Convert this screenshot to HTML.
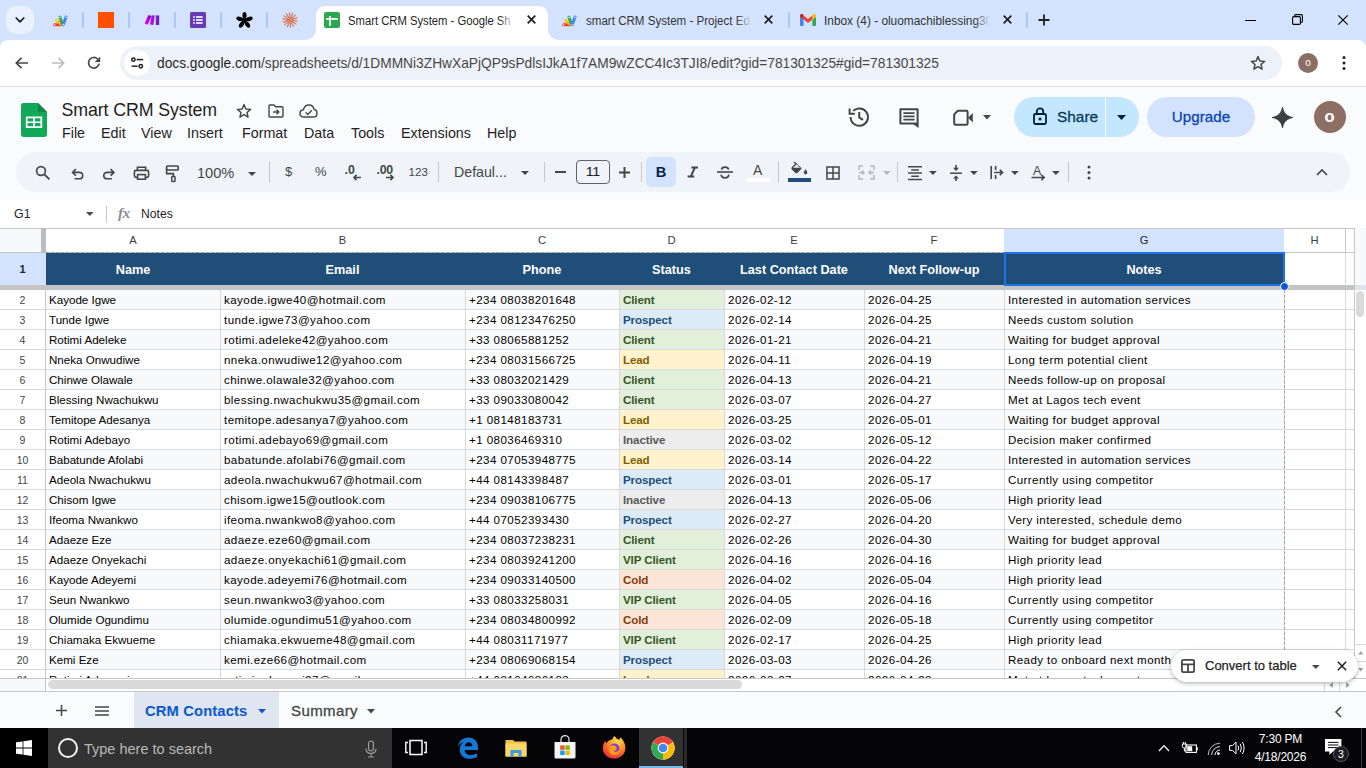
<!DOCTYPE html>
<html>
<head>
<meta charset="utf-8">
<title>Smart CRM System - Google Sheets</title>
<style>
*{box-sizing:border-box;margin:0;padding:0}
html,body{width:1366px;height:768px;overflow:hidden;background:#fff;font-family:"Liberation Sans",sans-serif;}
.abs{position:absolute}
#root{position:relative;width:1366px;height:768px;overflow:hidden;background:#fff}
svg{position:absolute;overflow:visible}
#tabstrip{left:0;top:0;width:1366px;height:50px;background:#d3e3fd}
.tsep{position:absolute;top:12px;width:2px;height:16px;background:#a8c7fa;border-radius:1px}
.tabtxt{position:absolute;top:13px;font-size:12px;color:#1f1f1f;white-space:nowrap;overflow:hidden;height:18px;line-height:17px;transform-origin:0 0}
#addr{left:0;top:40px;width:1366px;height:46px;background:#fff;border-radius:8px 8px 0 0}
#omni{left:120px;top:46px;width:1162px;height:34px;border-radius:17px;background:#edf2fa}
#appbar{left:0;top:87px;width:1366px;height:113px;background:#f9fbfd}
.menu{position:absolute;top:124px;font-size:14.3px;color:#1f1f1f;white-space:nowrap;line-height:18px}
#tb{left:16px;top:152px;width:1334px;height:40px;border-radius:20px;background:#f0f4f9}
.tbsep{position:absolute;top:162px;width:1px;height:20px;background:#c7c7c7}
.tbt{position:absolute;color:#444746;white-space:nowrap}
#fbar{left:0;top:200px;width:1366px;height:28px;background:#fff}
#grid{left:0;top:228px;width:1366px;height:463px;background:#fff;overflow:hidden}
.ch{position:absolute;top:0;height:25px;border-right:1px solid #c4c7c5;border-top:1px solid #c4c7c5;border-bottom:1px solid #c4c7c5;background:#fff;font-size:11.2px;color:#3c4043;text-align:center;line-height:23px}
.rh{position:absolute;left:0;width:46px;height:20px;border-bottom:1px solid #d9d9d9;border-right:1px solid #c4c7c5;background:#fff;font-size:10.5px;color:#444746;text-align:center;line-height:20px}
.hd{position:absolute;top:25px;height:32px;background:#1f4e79;color:#fff;font-weight:bold;font-size:12.7px;text-align:center;line-height:35px;white-space:nowrap}
.c{position:absolute;height:20px;border-right:1px solid #d9d9d9;border-bottom:1px solid #d9d9d9;font-size:11.6px;line-height:20px;padding-left:3px;white-space:nowrap;overflow:hidden;color:#000}
.c.b{font-weight:bold;font-size:11.6px;letter-spacing:-0.12px;line-height:19px}
#sbar{left:0;top:691px;width:1366px;height:37px;background:#f9fbfd;border-top:1px solid #c4c7c5}
#task{left:0;top:728px;width:1366px;height:40px;background:#050508}
</style>
</head>
<body>
<div id="root">
<div id="tabstrip" class="abs"></div>
<div class="abs" style="left:6px;top:6px;width:28px;height:28px;border-radius:10px;background:#e9f0fe"></div>
<svg style="left:14px;top:14px" width="12" height="12" viewBox="0 0 12 12"><path d="M2.2 4 L6 7.8 L9.8 4" fill="none" stroke="#1f1f1f" stroke-width="1.7" stroke-linecap="round" stroke-linejoin="round"/></svg>
<svg style="left:52px;top:14px" width="17" height="13" viewBox="0 0 17 13"><g stroke-linecap="round" stroke-width="3" fill="none"><path d="M2.6 10.8 L8.8 10.8" stroke="#ea4335"/><path d="M4.6 6.4 L9 10.2" stroke="#fbbc04"/><path d="M8 3.2 L10 9.4" stroke="#34a853"/><path d="M11.3 10.6 L14 3" stroke="#4285f4"/></g><g fill="#fff"><circle cx="2.7" cy="10.8" r="0.7"/><circle cx="4.8" cy="6.6" r="0.7"/><circle cx="8.1" cy="3.5" r="0.7"/><circle cx="13.9" cy="3.3" r="0.7"/><circle cx="11.4" cy="10.4" r="0.7"/></g></svg>
<div class="tsep" style="left:82px"></div>
<div class="abs" style="left:98px;top:12px;width:16px;height:16px;background:#ff4f00"></div>
<div class="tsep" style="left:128px"></div>
<svg style="left:144px;top:12px" width="16" height="16" viewBox="0 0 16 16"><defs><linearGradient id="mk" x1="0" y1="1" x2="1" y2="0"><stop offset="0" stop-color="#f0f"/><stop offset="1" stop-color="#6d00cc"/></linearGradient></defs><path d="M0.6 11.4 L4.4 3 L7.4 4 L3.8 12.8 Z" fill="url(#mk)"/><path d="M6 12.6 L7.6 3.2 L10.8 3.6 L9.4 13 Z" fill="#a514dc"/><rect x="11.8" y="3.4" width="3.4" height="9.6" fill="#6d22c4"/></svg>
<div class="tsep" style="left:174px"></div>
<svg style="left:190px;top:12px" width="16" height="16" viewBox="0 0 16 16"><rect width="16" height="16" rx="1.5" fill="#673ab7"/><g fill="#fff"><rect x="3.2" y="4.2" width="1.6" height="1.6"/><rect x="3.2" y="7.2" width="1.6" height="1.6"/><rect x="3.2" y="10.2" width="1.6" height="1.6"/><rect x="6" y="4.2" width="6.6" height="1.6"/><rect x="6" y="7.2" width="6.6" height="1.6"/><rect x="6" y="10.2" width="6.6" height="1.6"/></g></svg>
<div class="tsep" style="left:220px"></div>
<svg style="left:235.6px;top:11.8px" width="17" height="17" viewBox="-8.5 -8.5 17 17"><g fill="#000"><ellipse cx="0" cy="-5" rx="2.05" ry="3.5" transform="rotate(0)"/><ellipse cx="0" cy="-5" rx="2.05" ry="3.5" transform="rotate(72)"/><ellipse cx="0" cy="-5" rx="2.05" ry="3.5" transform="rotate(144)"/><ellipse cx="0" cy="-5" rx="2.05" ry="3.5" transform="rotate(216)"/><ellipse cx="0" cy="-5" rx="2.05" ry="3.5" transform="rotate(288)"/><circle cx="0" cy="0" r="2.4"/></g></svg>
<div class="tsep" style="left:266px"></div>
<svg style="left:282px;top:12px" width="16" height="16" viewBox="0 0 16 16"><g stroke="#d97757" stroke-width="1.25" stroke-linecap="round"><path d="M9.19 8.18 L15.12 9.08"/><path d="M8.99 8.68 L13.95 12.06"/><path d="M8.60 9.04 L11.60 14.24"/><path d="M8.09 9.20 L8.54 15.18"/><path d="M7.56 9.12 L5.37 14.70"/><path d="M7.12 8.82 L2.72 12.90"/><path d="M6.85 8.35 L1.12 10.12"/><path d="M6.81 7.82 L0.88 6.92"/><path d="M7.01 7.32 L2.05 3.94"/><path d="M7.40 6.96 L4.40 1.76"/><path d="M7.91 6.80 L7.46 0.82"/><path d="M8.44 6.88 L10.63 1.30"/><path d="M8.88 7.18 L13.28 3.10"/><path d="M9.15 7.65 L14.88 5.88"/></g></svg>
<svg style="left:304px;top:6px" width="256" height="34" viewBox="0 0 256 34"><path d="M0 34 C7 34 12 30 12 22 V10 C12 4 16 0 22 0 H234 C240 0 244 4 244 10 V22 C244 30 249 34 256 34 Z" fill="#fff"/></svg>
<svg style="left:324px;top:12px" width="16" height="16" viewBox="0 0 16 16"><rect width="16" height="16" rx="2" fill="#2da650"/><path d="M2 6.9 H14 M6 4 V13.8" stroke="#fff" stroke-width="1.8" fill="none"/></svg>
<div class="tabtxt" style="left:348px;width:177px;transform:scaleX(.938)">Smart CRM System - Google Sh</div>
<div class="abs" style="left:499px;top:10px;width:18px;height:20px;background:linear-gradient(90deg,rgba(255,255,255,0),#fff 85%)"></div>
<svg style="left:527px;top:15px" width="9" height="9" viewBox="0 0 9 9"><path d="M0.7 0.7 L8.3 8.3 M8.3 0.7 L0.7 8.3" stroke="#1f1f1f" stroke-width="1.7" fill="none"/></svg>
<svg style="left:561px;top:14px" width="17" height="13" viewBox="0 0 17 13"><g stroke-linecap="round" stroke-width="3" fill="none"><path d="M2.6 10.8 L8.8 10.8" stroke="#ea4335"/><path d="M4.6 6.4 L9 10.2" stroke="#fbbc04"/><path d="M8 3.2 L10 9.4" stroke="#34a853"/><path d="M11.3 10.6 L14 3" stroke="#4285f4"/></g><g fill="#fff"><circle cx="2.7" cy="10.8" r="0.7"/><circle cx="4.8" cy="6.6" r="0.7"/><circle cx="8.1" cy="3.5" r="0.7"/><circle cx="13.9" cy="3.3" r="0.7"/><circle cx="11.4" cy="10.4" r="0.7"/></g></svg>
<div class="tabtxt" style="left:585.5px;width:172px;transform:scaleX(.964);color:#333">smart CRM System - Project Edi</div>
<div class="abs" style="left:736px;top:10px;width:18px;height:20px;background:linear-gradient(90deg,rgba(211,227,253,0),#d3e3fd 85%)"></div>
<svg style="left:764px;top:15px" width="9" height="9" viewBox="0 0 9 9"><path d="M0.7 0.7 L8.3 8.3 M8.3 0.7 L0.7 8.3" stroke="#1f1f1f" stroke-width="1.7" fill="none"/></svg>
<div class="tsep" style="left:788px"></div>
<svg style="left:800px;top:14px" width="16" height="12" viewBox="0 0 16 12"><path d="M0 1.2 V11 Q0 12 1 12 H3.6 V5.2 L8 8.6 L12.4 5.2 V12 H15 Q16 12 16 11 V1.2" fill="none"/><path d="M0 3 V11 Q0 12 1 12 H3.6 V5.6 Z" fill="#4285f4"/><path d="M16 3 V11 Q16 12 15 12 H12.4 V5.6 Z" fill="#34a853"/><path d="M3.6 5.6 V1.6 L8 5 L12.4 1.6 V5.6 L8 9 Z" fill="#ea4335"/><path d="M0 3 V1.6 C0 0 1.8 -0.6 3 0.4 L3.6 0.9 V5.6 Z" fill="#c5221f"/><path d="M16 3 V1.6 C16 0 14.2 -0.6 13 0.4 L12.4 0.9 V5.6 Z" fill="#fbbc04"/></svg>
<div class="tabtxt" style="left:824px;width:168px;transform:scaleX(.989);color:#333">Inbox (4) - oluomachiblessing30</div>
<div class="abs" style="left:975px;top:10px;width:18px;height:20px;background:linear-gradient(90deg,rgba(211,227,253,0),#d3e3fd 85%)"></div>
<svg style="left:1003px;top:15px" width="9" height="9" viewBox="0 0 9 9"><path d="M0.7 0.7 L8.3 8.3 M8.3 0.7 L0.7 8.3" stroke="#1f1f1f" stroke-width="1.7" fill="none"/></svg>
<div class="tsep" style="left:1026px"></div>
<svg style="left:1037px;top:13px" width="14" height="14" viewBox="0 0 14 14"><path d="M7 1.5 V12.5 M1.5 7 H12.5" stroke="#1f1f1f" stroke-width="1.8" fill="none"/></svg>
<div class="abs" style="left:1245px;top:20px;width:11px;height:1px;background:#000"></div>
<svg style="left:1292px;top:14px" width="11" height="11" viewBox="0 0 11 11"><rect x="0.6" y="2.6" width="7.8" height="7.8" rx="1.2" fill="none" stroke="#000" stroke-width="1.1"/><path d="M2.6 2.4 V1.8 Q2.6 0.6 3.8 0.6 H9.2 Q10.4 0.6 10.4 1.8 V7.2 Q10.4 8.4 9.2 8.4 H8.6" fill="none" stroke="#000" stroke-width="1.1"/></svg>
<svg style="left:1338px;top:14.5px" width="10" height="10" viewBox="0 0 10 10"><path d="M0.3 0.3 L9.7 9.7 M9.7 0.3 L0.3 9.7" stroke="#000" stroke-width="1.15"/></svg>
<div id="addr" class="abs"></div>
<svg style="left:14px;top:55px" width="16" height="16" viewBox="0 0 16 16"><path d="M14 8 H2.5 M7.5 2.8 L2.3 8 L7.5 13.2" fill="none" stroke="#474747" stroke-width="1.7"/></svg>
<svg style="left:50px;top:55px" width="16" height="16" viewBox="0 0 16 16"><path d="M2 8 H13.5 M8.5 2.8 L13.7 8 L8.5 13.2" fill="none" stroke="#bdbdbd" stroke-width="1.7"/></svg>
<svg style="left:86px;top:55px" width="16" height="16" viewBox="0 0 16 16"><path d="M13.1 8.6 A5.3 5.3 0 1 1 11.6 4" fill="none" stroke="#474747" stroke-width="1.7"/><path d="M14.2 1.6 V7 H8.8 Z" fill="#474747"/></svg>
<div id="omni" class="abs"></div>
<div class="abs" style="left:124px;top:50px;width:26px;height:26px;border-radius:13px;background:#fff"></div>
<svg style="left:131px;top:57px" width="13" height="12" viewBox="0 0 13 12"><g fill="none" stroke="#1f1f1f" stroke-width="1.5"><circle cx="2.4" cy="2.6" r="1.7"/><path d="M5.6 2.6 H12.2"/><path d="M0.6 9.2 H6.6"/><circle cx="9.8" cy="9.2" r="1.7"/></g></svg>
<div class="abs" style="left:157px;top:55px;font-size:13.75px;line-height:18px;color:#1f1f1f;white-space:nowrap">docs.google.com<span style="color:#474747">/spreadsheets/d/1DMMNi3ZHwXaPjQP9sPdlsIJkA1f7AM9wZCC4Ic3TJI8/edit?gid=781301325#gid=781301325</span></div>
<svg style="left:1250px;top:55px" width="16" height="16" viewBox="0 0 18 18"><path d="M9 1.8 L11.1 6.7 L16.4 7.2 L12.4 10.7 L13.6 15.9 L9 13.1 L4.4 15.9 L5.6 10.7 L1.6 7.2 L6.9 6.7 Z" fill="none" stroke="#474747" stroke-width="1.7" stroke-linejoin="round"/></svg>
<div class="abs" style="left:1298px;top:53px;width:20px;height:20px;border-radius:10px;background:#8d6e63;color:#fff;font-size:10px;line-height:19px;text-align:center">o</div>
<svg style="left:1342px;top:55px" width="4" height="16" viewBox="0 0 4 16"><circle cx="2" cy="2.5" r="1.5" fill="#1f1f1f"/><circle cx="2" cy="8" r="1.5" fill="#1f1f1f"/><circle cx="2" cy="13.5" r="1.5" fill="#1f1f1f"/></svg>
<div class="abs" style="left:0;top:86px;width:1366px;height:1px;background:#dfe3e8"></div>
<div id="appbar" class="abs"></div>
<svg style="left:21px;top:103px" width="26" height="34" viewBox="0 0 26 34"><path d="M2.4 0 H17 L26 9 V31.6 Q26 34 23.6 34 H2.4 Q0 34 0 31.6 V2.4 Q0 0 2.4 0 Z" fill="#0fa958"/><path d="M17 0 L26 9 H17 Z" fill="#088a43"/><path d="M4.8 13.4 H21.2 V25 H4.8 Z M6.6 15.2 V18.4 H12.1 V15.2 Z M13.9 15.2 V18.4 H19.4 V15.2 Z M6.6 20 V23.2 H12.1 V20 Z M13.9 20 V23.2 H19.4 V20 Z" fill="#fff" fill-rule="evenodd"/></svg>
<div class="abs" style="left:61.5px;top:98px;font-size:17.8px;line-height:24px;color:#1f1f1f;white-space:nowrap;letter-spacing:-0.1px">Smart CRM System</div>
<svg style="left:236px;top:103px" width="16" height="16" viewBox="0 0 16 16"><path d="M8 1.6 L9.9 6 L14.6 6.4 L11 9.5 L12.1 14.1 L8 11.6 L3.9 14.1 L5 9.5 L1.4 6.4 L6.1 6 Z" fill="none" stroke="#444746" stroke-width="1.4" stroke-linejoin="round"/></svg>
<svg style="left:268px;top:104px" width="16" height="14" viewBox="0 0 16 14"><path d="M1 2 Q1 1 2 1 H6 L7.6 2.8 H14 Q15 2.8 15 3.8 V12 Q15 13 14 13 H2 Q1 13 1 12 Z" fill="none" stroke="#444746" stroke-width="1.4"/><path d="M5 8 H10.6 M8.6 5.8 L10.8 8 L8.6 10.2" fill="none" stroke="#444746" stroke-width="1.4"/></svg>
<svg style="left:299px;top:104px" width="19" height="14" viewBox="0 0 19 14"><path d="M5 13 Q1 13 1 9.4 Q1 6.2 4.4 5.8 Q5.6 1 10 1 Q14.2 1 15 5.4 Q18 5.8 18 9.2 Q18 13 14.4 13 Z" fill="none" stroke="#444746" stroke-width="1.4"/><path d="M6.6 8.2 L8.8 10.4 L12.8 6.2" fill="none" stroke="#444746" stroke-width="1.4"/></svg>
<div class="menu" style="left:62px">File</div>
<div class="menu" style="left:101px">Edit</div>
<div class="menu" style="left:141px">View</div>
<div class="menu" style="left:187px">Insert</div>
<div class="menu" style="left:242px">Format</div>
<div class="menu" style="left:304px">Data</div>
<div class="menu" style="left:351px">Tools</div>
<div class="menu" style="left:401px">Extensions</div>
<div class="menu" style="left:487px">Help</div>
<svg style="left:848px;top:106px" width="22" height="22" viewBox="0 0 22 22"><path d="M2.6 11 A8.7 8.7 0 1 0 5.2 4.9" fill="none" stroke="#444746" stroke-width="2"/><path d="M1.6 2.6 V7.8 H6.8" fill="none" stroke="#444746" stroke-width="2"/><path d="M11.2 6 V11.4 L15 13.8" fill="none" stroke="#444746" stroke-width="2"/></svg>
<svg style="left:898px;top:107px" width="22" height="22" viewBox="0 0 22 22"><path d="M2.4 2.2 H19.6 V16.6 H2.4 Z" fill="none" stroke="#444746" stroke-width="2" stroke-linejoin="round"/><path d="M14.4 16.6 H20.6 V21 Z" fill="#444746"/><path d="M5.4 6.2 H16.6 M5.4 9.4 H16.6 M5.4 12.6 H16.6" stroke="#444746" stroke-width="1.8"/></svg>
<svg style="left:952px;top:108px" width="22" height="19" viewBox="0 0 22 19"><path d="M2.2 6.4 L5.8 2.8 H14.4 Q15.6 2.8 15.6 4 V15.6 Q15.6 16.8 14.4 16.8 H3.4 Q2.2 16.8 2.2 15.6 Z" fill="none" stroke="#444746" stroke-width="2" stroke-linejoin="round"/><path d="M16 9.8 L20.8 5 V14.6 Z" fill="#444746"/></svg>
<svg style="left:983px;top:115px" width="8" height="4.5" viewBox="0 0 8 4.5"><path d="M0 0 H8 L4 4.5 Z" fill="#444746"/></svg>
<div class="abs" style="left:1014px;top:97px;width:125px;height:40px;border-radius:20px;background:#c2e7ff"></div>
<div class="abs" style="left:1105px;top:97px;width:1px;height:40px;background:#f9fbfd"></div>
<svg style="left:1033px;top:107px" width="14" height="18" viewBox="0 0 14 18"><rect x="1" y="7" width="12" height="10" rx="1.4" fill="none" stroke="#001d35" stroke-width="1.8"/><path d="M3.8 7 V4.6 A3.2 3.2 0 0 1 10.2 4.6 V7" fill="none" stroke="#001d35" stroke-width="1.8"/><circle cx="7" cy="12" r="1.5" fill="#001d35"/></svg>
<div class="abs" style="left:1057px;top:107px;font-size:15.4px;line-height:20px;color:#0a3a5c;white-space:nowrap;-webkit-text-stroke:0.3px #0a3a5c">Share</div>
<svg style="left:1117px;top:115px" width="9" height="5" viewBox="0 0 9 5"><path d="M0 0 H9 L4.5 5 Z" fill="#001d35"/></svg>
<div class="abs" style="left:1147px;top:97px;width:108px;height:40px;border-radius:20px;background:#d3e3fd"></div>
<div class="abs" style="left:1147px;top:107px;width:108px;text-align:center;font-size:15.2px;line-height:20px;color:#0b45b5;white-space:nowrap;-webkit-text-stroke:0.3px #0b45b5">Upgrade</div>
<svg style="left:1271.5px;top:106.5px" width="21" height="21" viewBox="0 0 20 20"><path d="M10 0 C10.8 5.6 14.4 9.2 20 10 C14.4 10.8 10.8 14.4 10 20 C9.2 14.4 5.6 10.8 0 10 C5.6 9.2 9.2 5.6 10 0 Z" fill="#3c4043" stroke="#3c4043" stroke-width="0.8" stroke-linejoin="round"/></svg>
<div class="abs" style="left:1313.5px;top:101px;width:32px;height:32px;border-radius:16px;background:#8d6e63;color:#fff;font-size:16.5px;font-weight:bold;line-height:30px;text-align:center">o</div>
<div id="tb" class="abs"></div>
<svg style="left:35px;top:165px" width="16" height="16" viewBox="0 0 16 16"><circle cx="6" cy="6" r="4.4" fill="none" stroke="#444746" stroke-width="1.7"/><path d="M9.4 9.4 L14.4 14.4" stroke="#444746" stroke-width="1.9"/></svg>
<svg style="left:70.5px;top:167px" width="13.5" height="12.6" viewBox="0 0 15 14"><path d="M2 6 H9 Q13 6 13 9.6 Q13 13 9 13 H4" fill="none" stroke="#444746" stroke-width="1.8"/><path d="M5.4 2.4 L1.8 6 L5.4 9.6" fill="none" stroke="#444746" stroke-width="1.8"/></svg>
<svg style="left:101.5px;top:167px" width="13.5" height="12.6" viewBox="0 0 15 14"><path d="M13 6 H6 Q2 6 2 9.6 Q2 13 6 13 H11" fill="none" stroke="#444746" stroke-width="1.8"/><path d="M9.6 2.4 L13.2 6 L9.6 9.6" fill="none" stroke="#444746" stroke-width="1.8"/></svg>
<svg style="left:132.5px;top:165px" width="17" height="16" viewBox="0 0 17 16"><path d="M4.4 5.4 V2.2 H12.6 V5.4" fill="none" stroke="#444746" stroke-width="1.6"/><rect x="1.4" y="5.4" width="14.2" height="7" rx="1.6" fill="none" stroke="#444746" stroke-width="1.6"/><rect x="4.6" y="9.6" width="7.8" height="4.6" fill="#f0f4f9" stroke="#444746" stroke-width="1.6"/></svg>
<svg style="left:164px;top:164px" width="16" height="18" viewBox="0 0 16 18"><rect x="2.6" y="2" width="11.6" height="4" rx="0.8" fill="none" stroke="#444746" stroke-width="1.6"/><path d="M2.6 4.4 V9.6 H9.4 V12.4" fill="none" stroke="#444746" stroke-width="1.6"/><rect x="7.8" y="12.4" width="3.2" height="5" rx="0.7" fill="none" stroke="#444746" stroke-width="1.5"/></svg>
<div class="tbt" style="left:197px;top:164px;font-size:14.6px;line-height:18px">100%</div>
<svg style="left:248px;top:171.5px" width="8" height="4" viewBox="0 0 8 4"><path d="M0 0 H8 L4 4 Z" fill="#444746"/></svg>
<div class="tbsep" style="left:269px"></div>
<div class="tbt" style="left:285px;top:163px;font-size:13px;line-height:18px">$</div>
<div class="tbt" style="left:315px;top:163px;font-size:13px;line-height:18px">%</div>
<div class="tbt" style="left:344.5px;top:161px;font-size:12.4px;line-height:18px;font-weight:bold">.0</div>
<svg style="left:353px;top:174px" width="9" height="7" viewBox="0 0 9 7"><path d="M1 3.5 H8 M3.6 0.9 L1 3.5 L3.6 6.1" fill="none" stroke="#444746" stroke-width="1.6"/></svg>
<div class="tbt" style="left:376.5px;top:161px;font-size:12.4px;line-height:18px;font-weight:bold;letter-spacing:-0.3px">.00</div>
<svg style="left:385px;top:174px" width="9" height="7" viewBox="0 0 9 7"><path d="M1 3.5 H8 M5.4 0.9 L8 3.5 L5.4 6.1" fill="none" stroke="#444746" stroke-width="1.6"/></svg>
<div class="tbt" style="left:408.5px;top:163px;font-size:11.6px;line-height:18px">123</div>
<div class="tbsep" style="left:438px"></div>
<div class="tbt" style="left:454px;top:163px;font-size:14.2px;line-height:18px;letter-spacing:0px">Defaul...</div>
<svg style="left:521px;top:170.5px" width="8" height="4" viewBox="0 0 8 4"><path d="M0 0 H8 L4 4 Z" fill="#444746"/></svg>
<div class="tbsep" style="left:544px"></div>
<div class="abs" style="left:555px;top:171px;width:11px;height:2px;background:#444746"></div>
<div class="abs" style="left:576px;top:160px;width:34px;height:24px;border:1px solid #5f6368;border-radius:4px"></div>
<div class="tbt" style="left:576px;top:163px;width:34px;text-align:center;font-size:13.4px;line-height:18px;color:#1f1f1f;-webkit-text-stroke:0.2px #1f1f1f">11</div>
<svg style="left:619px;top:166.5px" width="11" height="11" viewBox="0 0 11 11"><path d="M5.5 0 V11 M0 5.5 H11" stroke="#444746" stroke-width="2"/></svg>
<div class="tbsep" style="left:641px"></div>
<div class="abs" style="left:646px;top:157px;width:30px;height:30px;border-radius:5px;background:#d3e3fd"></div>
<div class="abs" style="left:646px;top:162px;width:30px;text-align:center;font-size:14.6px;font-weight:bold;line-height:20px;color:#041e49">B</div>
<svg style="left:686px;top:166px" width="14" height="12" viewBox="0 0 14 12"><path d="M5.4 1.6 H12 M1.6 10.6 H8.2 M8.9 1.6 L4.7 10.6" fill="none" stroke="#444746" stroke-width="2"/></svg>
<svg style="left:716px;top:166px" width="18" height="13" viewBox="0 0 18 13"><path d="M12.6 3.6 Q12.2 1.2 9 1.2 Q5.8 1.2 5.6 3.8" fill="none" stroke="#444746" stroke-width="1.7"/><path d="M5.2 8.6 Q5.4 11.8 9 11.8 Q12.6 11.8 12.8 8.6" fill="none" stroke="#444746" stroke-width="1.7"/><path d="M1 6 H17" stroke="#444746" stroke-width="1.6"/></svg>
<div class="tbt" style="left:753px;top:160px;font-size:14px;line-height:20px">A</div>
<div class="abs" style="left:747px;top:178px;width:23px;height:4px;background:#fff"></div>
<div class="tbsep" style="left:778px"></div>
<svg style="left:791px;top:161px" width="18" height="15" viewBox="0 0 18 15"><path d="M3.2 1 L9.8 7.6 L6.2 11.2 Q5.4 12 4.6 11.2 L1.4 8 Q0.6 7.2 1.4 6.4 L5.4 2.4" fill="#444746" stroke="#444746" stroke-width="1.4" stroke-linejoin="round"/><path d="M2 6.8 L5.6 3.2 L9 6.8 Z" fill="#f0f4f9"/><path d="M14.6 8 Q16.4 10.6 16.4 11.6 A1.8 1.8 0 0 1 12.8 11.6 Q12.8 10.6 14.6 8 Z" fill="#444746"/></svg>
<div class="abs" style="left:788px;top:178px;width:23px;height:4px;background:#1f4e79"></div>
<svg style="left:826px;top:166px" width="14" height="14" viewBox="0 0 15 15"><path d="M1 1 H14 V14 H1 Z M7.5 1 V14 M1 7.5 H14" fill="none" stroke="#444746" stroke-width="1.6"/></svg>
<svg style="left:858px;top:165px" width="17" height="15" viewBox="0 0 17 15"><path d="M1 5 V1 H5 M12 1 H16 V5 M16 10 V14 H12 M5 14 H1 V10" fill="none" stroke="#b4b8bb" stroke-width="1.5"/><path d="M1 7.5 H6 M4 5.5 L6 7.5 L4 9.5 M16 7.5 H11 M13 5.5 L11 7.5 L13 9.5" fill="none" stroke="#b4b8bb" stroke-width="1.5"/></svg>
<svg style="left:883px;top:171px" width="7.8" height="4" viewBox="0 0 7.8 4"><path d="M0 0 H7.8 L3.9 4 Z" fill="#b4b8bb"/></svg>
<div class="tbsep" style="left:897px"></div>
<svg style="left:908px;top:166px" width="14" height="14" viewBox="0 0 14 14"><path d="M0 0.8 H14 M3.3 4 H10.9 M0 7.1 H14 M3.3 10.3 H10.9 M0 13.4 H14" stroke="#444746" stroke-width="1.5"/></svg>
<svg style="left:929px;top:171px" width="7.8" height="4" viewBox="0 0 7.8 4"><path d="M0 0 H7.8 L3.9 4 Z" fill="#444746"/></svg>
<svg style="left:949px;top:164px" width="14" height="18" viewBox="0 0 14 18"><path d="M1.1 9.2 H12.9" stroke="#444746" stroke-width="1.5"/><path d="M7 1 V5.4 M7 17 V13" stroke="#444746" stroke-width="1.6"/><path d="M4 3.8 H10 L7 7 Z M4 14.6 H10 L7 11.4 Z" fill="#444746"/></svg>
<svg style="left:970px;top:171px" width="7.8" height="4" viewBox="0 0 7.8 4"><path d="M0 0 H7.8 L3.9 4 Z" fill="#444746"/></svg>
<svg style="left:990px;top:165px" width="14" height="15" viewBox="0 0 14 15"><path d="M1.2 1 V14 M5.6 1 V5 M5.6 10 V14" stroke="#444746" stroke-width="1.6"/><path d="M4.2 7.5 H12.4 M9.8 4.9 L12.6 7.5 L9.8 10.1" fill="none" stroke="#444746" stroke-width="1.6"/></svg>
<svg style="left:1011px;top:171px" width="7.8" height="4" viewBox="0 0 7.8 4"><path d="M0 0 H7.8 L3.9 4 Z" fill="#444746"/></svg>
<div class="tbt" style="left:1033px;top:161px;font-size:12.4px;line-height:20px">A</div>
<svg style="left:1031px;top:174px" width="15" height="7" viewBox="0 0 15 7"><path d="M0.5 3.5 H13 M10.4 0.9 L13.2 3.5 L10.4 6.1" fill="none" stroke="#444746" stroke-width="1.5"/></svg>
<svg style="left:1052px;top:171px" width="7.8" height="4" viewBox="0 0 7.8 4"><path d="M0 0 H7.8 L3.9 4 Z" fill="#444746"/></svg>
<div class="tbsep" style="left:1068px"></div>
<svg style="left:1087px;top:165px" width="4" height="15" viewBox="0 0 4 15"><circle cx="2" cy="2" r="1.5" fill="#444746"/><circle cx="2" cy="7.5" r="1.5" fill="#444746"/><circle cx="2" cy="13" r="1.5" fill="#444746"/></svg>
<svg style="left:1316px;top:168px" width="12" height="8" viewBox="0 0 12 8"><path d="M1 7 L6 2 L11 7" fill="none" stroke="#444746" stroke-width="1.7"/></svg>
<div id="fbar" class="abs"></div>
<div class="abs" style="left:14px;top:206px;font-size:12.4px;line-height:16px;color:#1f1f1f">G1</div>
<svg style="left:86px;top:212px" width="7.6" height="4" viewBox="0 0 7.6 4"><path d="M0 0 H7.6 L3.8 4 Z" fill="#444746"/></svg>
<div class="abs" style="left:106px;top:206px;width:1px;height:17px;background:#c7c7c7"></div>
<div class="abs" style="left:118px;top:204px;font-size:15.5px;line-height:18px;color:#8a9095;font-style:italic;font-weight:bold;font-family:'Liberation Serif',serif;letter-spacing:-0.6px">fx</div>
<div class="abs" style="left:141px;top:206px;font-size:12.2px;line-height:16px;color:#1f1f1f">Notes</div>
<div id="grid" class="abs">
<div class="abs" style="left:0;top:0;width:42px;height:25px;background:#f8f9fa;border-top:1px solid #c4c7c5;border-bottom:1px solid #c4c7c5"></div>
<div class="abs" style="left:41px;top:0;width:5px;height:25px;background:#bdbdbd"></div>
<div class="ch" style="left:46px;width:175px;">A</div>
<div class="ch" style="left:220px;width:246px;">B</div>
<div class="ch" style="left:465px;width:155px;">C</div>
<div class="ch" style="left:619px;width:106px;">D</div>
<div class="ch" style="left:724px;width:141px;">E</div>
<div class="ch" style="left:864px;width:141px;">F</div>
<div class="ch" style="left:1004px;width:281px;background:#d3e3fd;color:#1f1f1f;">G</div>
<div class="ch" style="left:1284px;width:62px;">H</div>
<div class="ch" style="left:1346px;width:8px;border-right:none"></div>
<div class="abs" style="left:0;top:25px;width:46px;height:32px;background:#d3e3fd;font-size:11px;font-weight:bold;color:#1f1f1f;text-align:center;line-height:33px;padding-right:1px">1</div>
<div class="abs" style="left:46px;top:25px;width:1239px;height:32px;background:#1f4e79"></div>
<div class="hd" style="left:46px;width:174px;background:none">Name</div>
<div class="hd" style="left:220px;width:245px;background:none">Email</div>
<div class="hd" style="left:465px;width:154px;background:none">Phone</div>
<div class="hd" style="left:619px;width:105px;background:none">Status</div>
<div class="hd" style="left:724px;width:140px;background:none">Last Contact Date</div>
<div class="hd" style="left:864px;width:140px;background:none">Next Follow-up</div>
<div class="hd" style="left:1004px;width:280px;background:none">Notes</div>
<div class="abs" style="left:1285px;top:25px;width:61px;height:32px;border-right:1px solid #d9d9d9"></div>
<div class="abs" style="left:46px;top:24px;width:1239px;height:0;border-top:1px dashed #a0a4a8"></div>
<div class="abs" style="left:0;top:57px;width:1354px;height:5px;background:#c4c4c4"></div>
<div class="abs" style="left:1004px;top:24px;width:281px;height:34px;border:2px solid #1a73e8"></div>
<div class="rh" style="top:62px">2</div>
<div class="c" style="left:46px;top:62px;width:175px;background:#f8f9fa;letter-spacing:0px;">Kayode Igwe</div>
<div class="c" style="left:221px;top:62px;width:245px;background:#f8f9fa;letter-spacing:0.41px;">kayode.igwe40@hotmail.com</div>
<div class="c" style="left:466px;top:62px;width:154px;background:#f8f9fa;letter-spacing:0.42px;">+234 08038201648</div>
<div class="c b" style="left:620px;top:62px;width:105px;background:#e2efda;color:#375623;">Client</div>
<div class="c" style="left:725px;top:62px;width:140px;background:#f8f9fa;letter-spacing:0.47px;">2026-02-12</div>
<div class="c" style="left:865px;top:62px;width:140px;background:#f8f9fa;letter-spacing:0.47px;">2026-04-25</div>
<div class="c" style="left:1005px;top:62px;width:280px;background:#f8f9fa;letter-spacing:0.39px;">Interested in automation services</div>
<div class="c" style="left:1285px;top:62px;width:61px;background:#fff"></div>
<div class="c" style="left:1346px;top:62px;width:8px;background:#fff;border-right:none"></div>
<div class="rh" style="top:82px">3</div>
<div class="c" style="left:46px;top:82px;width:175px;background:#fff;letter-spacing:0px;">Tunde Igwe</div>
<div class="c" style="left:221px;top:82px;width:245px;background:#fff;letter-spacing:0.41px;">tunde.igwe73@yahoo.com</div>
<div class="c" style="left:466px;top:82px;width:154px;background:#fff;letter-spacing:0.42px;">+234 08123476250</div>
<div class="c b" style="left:620px;top:82px;width:105px;background:#ddebf7;color:#1f4e79;">Prospect</div>
<div class="c" style="left:725px;top:82px;width:140px;background:#fff;letter-spacing:0.47px;">2026-02-14</div>
<div class="c" style="left:865px;top:82px;width:140px;background:#fff;letter-spacing:0.47px;">2026-04-25</div>
<div class="c" style="left:1005px;top:82px;width:280px;background:#fff;letter-spacing:0.39px;">Needs custom solution</div>
<div class="c" style="left:1285px;top:82px;width:61px;background:#fff"></div>
<div class="c" style="left:1346px;top:82px;width:8px;background:#fff;border-right:none"></div>
<div class="rh" style="top:102px">4</div>
<div class="c" style="left:46px;top:102px;width:175px;background:#f8f9fa;letter-spacing:0px;">Rotimi Adeleke</div>
<div class="c" style="left:221px;top:102px;width:245px;background:#f8f9fa;letter-spacing:0.41px;">rotimi.adeleke42@yahoo.com</div>
<div class="c" style="left:466px;top:102px;width:154px;background:#f8f9fa;letter-spacing:0.42px;">+33 08065881252</div>
<div class="c b" style="left:620px;top:102px;width:105px;background:#e2efda;color:#375623;">Client</div>
<div class="c" style="left:725px;top:102px;width:140px;background:#f8f9fa;letter-spacing:0.47px;">2026-01-21</div>
<div class="c" style="left:865px;top:102px;width:140px;background:#f8f9fa;letter-spacing:0.47px;">2026-04-21</div>
<div class="c" style="left:1005px;top:102px;width:280px;background:#f8f9fa;letter-spacing:0.39px;">Waiting for budget approval</div>
<div class="c" style="left:1285px;top:102px;width:61px;background:#fff"></div>
<div class="c" style="left:1346px;top:102px;width:8px;background:#fff;border-right:none"></div>
<div class="rh" style="top:122px">5</div>
<div class="c" style="left:46px;top:122px;width:175px;background:#fff;letter-spacing:0px;">Nneka Onwudiwe</div>
<div class="c" style="left:221px;top:122px;width:245px;background:#fff;letter-spacing:0.41px;">nneka.onwudiwe12@yahoo.com</div>
<div class="c" style="left:466px;top:122px;width:154px;background:#fff;letter-spacing:0.42px;">+234 08031566725</div>
<div class="c b" style="left:620px;top:122px;width:105px;background:#fff2cc;color:#7f6000;">Lead</div>
<div class="c" style="left:725px;top:122px;width:140px;background:#fff;letter-spacing:0.47px;">2026-04-11</div>
<div class="c" style="left:865px;top:122px;width:140px;background:#fff;letter-spacing:0.47px;">2026-04-19</div>
<div class="c" style="left:1005px;top:122px;width:280px;background:#fff;letter-spacing:0.39px;">Long term potential client</div>
<div class="c" style="left:1285px;top:122px;width:61px;background:#fff"></div>
<div class="c" style="left:1346px;top:122px;width:8px;background:#fff;border-right:none"></div>
<div class="rh" style="top:142px">6</div>
<div class="c" style="left:46px;top:142px;width:175px;background:#f8f9fa;letter-spacing:0px;">Chinwe Olawale</div>
<div class="c" style="left:221px;top:142px;width:245px;background:#f8f9fa;letter-spacing:0.41px;">chinwe.olawale32@yahoo.com</div>
<div class="c" style="left:466px;top:142px;width:154px;background:#f8f9fa;letter-spacing:0.42px;">+33 08032021429</div>
<div class="c b" style="left:620px;top:142px;width:105px;background:#e2efda;color:#375623;">Client</div>
<div class="c" style="left:725px;top:142px;width:140px;background:#f8f9fa;letter-spacing:0.47px;">2026-04-13</div>
<div class="c" style="left:865px;top:142px;width:140px;background:#f8f9fa;letter-spacing:0.47px;">2026-04-21</div>
<div class="c" style="left:1005px;top:142px;width:280px;background:#f8f9fa;letter-spacing:0.39px;">Needs follow-up on proposal</div>
<div class="c" style="left:1285px;top:142px;width:61px;background:#fff"></div>
<div class="c" style="left:1346px;top:142px;width:8px;background:#fff;border-right:none"></div>
<div class="rh" style="top:162px">7</div>
<div class="c" style="left:46px;top:162px;width:175px;background:#fff;letter-spacing:0px;">Blessing Nwachukwu</div>
<div class="c" style="left:221px;top:162px;width:245px;background:#fff;letter-spacing:0.41px;">blessing.nwachukwu35@gmail.com</div>
<div class="c" style="left:466px;top:162px;width:154px;background:#fff;letter-spacing:0.42px;">+33 09033080042</div>
<div class="c b" style="left:620px;top:162px;width:105px;background:#e2efda;color:#375623;">Client</div>
<div class="c" style="left:725px;top:162px;width:140px;background:#fff;letter-spacing:0.47px;">2026-03-07</div>
<div class="c" style="left:865px;top:162px;width:140px;background:#fff;letter-spacing:0.47px;">2026-04-27</div>
<div class="c" style="left:1005px;top:162px;width:280px;background:#fff;letter-spacing:0.39px;">Met at Lagos tech event</div>
<div class="c" style="left:1285px;top:162px;width:61px;background:#fff"></div>
<div class="c" style="left:1346px;top:162px;width:8px;background:#fff;border-right:none"></div>
<div class="rh" style="top:182px">8</div>
<div class="c" style="left:46px;top:182px;width:175px;background:#f8f9fa;letter-spacing:0px;">Temitope Adesanya</div>
<div class="c" style="left:221px;top:182px;width:245px;background:#f8f9fa;letter-spacing:0.41px;">temitope.adesanya7@yahoo.com</div>
<div class="c" style="left:466px;top:182px;width:154px;background:#f8f9fa;letter-spacing:0.42px;">+1 08148183731</div>
<div class="c b" style="left:620px;top:182px;width:105px;background:#fff2cc;color:#7f6000;">Lead</div>
<div class="c" style="left:725px;top:182px;width:140px;background:#f8f9fa;letter-spacing:0.47px;">2026-03-25</div>
<div class="c" style="left:865px;top:182px;width:140px;background:#f8f9fa;letter-spacing:0.47px;">2026-05-01</div>
<div class="c" style="left:1005px;top:182px;width:280px;background:#f8f9fa;letter-spacing:0.39px;">Waiting for budget approval</div>
<div class="c" style="left:1285px;top:182px;width:61px;background:#fff"></div>
<div class="c" style="left:1346px;top:182px;width:8px;background:#fff;border-right:none"></div>
<div class="rh" style="top:202px">9</div>
<div class="c" style="left:46px;top:202px;width:175px;background:#fff;letter-spacing:0px;">Rotimi Adebayo</div>
<div class="c" style="left:221px;top:202px;width:245px;background:#fff;letter-spacing:0.41px;">rotimi.adebayo69@gmail.com</div>
<div class="c" style="left:466px;top:202px;width:154px;background:#fff;letter-spacing:0.42px;">+1 08036469310</div>
<div class="c b" style="left:620px;top:202px;width:105px;background:#ededed;color:#595959;">Inactive</div>
<div class="c" style="left:725px;top:202px;width:140px;background:#fff;letter-spacing:0.47px;">2026-03-02</div>
<div class="c" style="left:865px;top:202px;width:140px;background:#fff;letter-spacing:0.47px;">2026-05-12</div>
<div class="c" style="left:1005px;top:202px;width:280px;background:#fff;letter-spacing:0.39px;">Decision maker confirmed</div>
<div class="c" style="left:1285px;top:202px;width:61px;background:#fff"></div>
<div class="c" style="left:1346px;top:202px;width:8px;background:#fff;border-right:none"></div>
<div class="rh" style="top:222px">10</div>
<div class="c" style="left:46px;top:222px;width:175px;background:#f8f9fa;letter-spacing:0px;">Babatunde Afolabi</div>
<div class="c" style="left:221px;top:222px;width:245px;background:#f8f9fa;letter-spacing:0.41px;">babatunde.afolabi76@gmail.com</div>
<div class="c" style="left:466px;top:222px;width:154px;background:#f8f9fa;letter-spacing:0.42px;">+234 07053948775</div>
<div class="c b" style="left:620px;top:222px;width:105px;background:#fff2cc;color:#7f6000;">Lead</div>
<div class="c" style="left:725px;top:222px;width:140px;background:#f8f9fa;letter-spacing:0.47px;">2026-03-14</div>
<div class="c" style="left:865px;top:222px;width:140px;background:#f8f9fa;letter-spacing:0.47px;">2026-04-22</div>
<div class="c" style="left:1005px;top:222px;width:280px;background:#f8f9fa;letter-spacing:0.39px;">Interested in automation services</div>
<div class="c" style="left:1285px;top:222px;width:61px;background:#fff"></div>
<div class="c" style="left:1346px;top:222px;width:8px;background:#fff;border-right:none"></div>
<div class="rh" style="top:242px">11</div>
<div class="c" style="left:46px;top:242px;width:175px;background:#fff;letter-spacing:0px;">Adeola Nwachukwu</div>
<div class="c" style="left:221px;top:242px;width:245px;background:#fff;letter-spacing:0.41px;">adeola.nwachukwu67@hotmail.com</div>
<div class="c" style="left:466px;top:242px;width:154px;background:#fff;letter-spacing:0.42px;">+44 08143398487</div>
<div class="c b" style="left:620px;top:242px;width:105px;background:#ddebf7;color:#1f4e79;">Prospect</div>
<div class="c" style="left:725px;top:242px;width:140px;background:#fff;letter-spacing:0.47px;">2026-03-01</div>
<div class="c" style="left:865px;top:242px;width:140px;background:#fff;letter-spacing:0.47px;">2026-05-17</div>
<div class="c" style="left:1005px;top:242px;width:280px;background:#fff;letter-spacing:0.39px;">Currently using competitor</div>
<div class="c" style="left:1285px;top:242px;width:61px;background:#fff"></div>
<div class="c" style="left:1346px;top:242px;width:8px;background:#fff;border-right:none"></div>
<div class="rh" style="top:262px">12</div>
<div class="c" style="left:46px;top:262px;width:175px;background:#f8f9fa;letter-spacing:0px;">Chisom Igwe</div>
<div class="c" style="left:221px;top:262px;width:245px;background:#f8f9fa;letter-spacing:0.41px;">chisom.igwe15@outlook.com</div>
<div class="c" style="left:466px;top:262px;width:154px;background:#f8f9fa;letter-spacing:0.42px;">+234 09038106775</div>
<div class="c b" style="left:620px;top:262px;width:105px;background:#ededed;color:#595959;">Inactive</div>
<div class="c" style="left:725px;top:262px;width:140px;background:#f8f9fa;letter-spacing:0.47px;">2026-04-13</div>
<div class="c" style="left:865px;top:262px;width:140px;background:#f8f9fa;letter-spacing:0.47px;">2026-05-06</div>
<div class="c" style="left:1005px;top:262px;width:280px;background:#f8f9fa;letter-spacing:0.39px;">High priority lead</div>
<div class="c" style="left:1285px;top:262px;width:61px;background:#fff"></div>
<div class="c" style="left:1346px;top:262px;width:8px;background:#fff;border-right:none"></div>
<div class="rh" style="top:282px">13</div>
<div class="c" style="left:46px;top:282px;width:175px;background:#fff;letter-spacing:0px;">Ifeoma Nwankwo</div>
<div class="c" style="left:221px;top:282px;width:245px;background:#fff;letter-spacing:0.41px;">ifeoma.nwankwo8@yahoo.com</div>
<div class="c" style="left:466px;top:282px;width:154px;background:#fff;letter-spacing:0.42px;">+44 07052393430</div>
<div class="c b" style="left:620px;top:282px;width:105px;background:#ddebf7;color:#1f4e79;">Prospect</div>
<div class="c" style="left:725px;top:282px;width:140px;background:#fff;letter-spacing:0.47px;">2026-02-27</div>
<div class="c" style="left:865px;top:282px;width:140px;background:#fff;letter-spacing:0.47px;">2026-04-20</div>
<div class="c" style="left:1005px;top:282px;width:280px;background:#fff;letter-spacing:0.39px;">Very interested, schedule demo</div>
<div class="c" style="left:1285px;top:282px;width:61px;background:#fff"></div>
<div class="c" style="left:1346px;top:282px;width:8px;background:#fff;border-right:none"></div>
<div class="rh" style="top:302px">14</div>
<div class="c" style="left:46px;top:302px;width:175px;background:#f8f9fa;letter-spacing:0px;">Adaeze Eze</div>
<div class="c" style="left:221px;top:302px;width:245px;background:#f8f9fa;letter-spacing:0.41px;">adaeze.eze60@gmail.com</div>
<div class="c" style="left:466px;top:302px;width:154px;background:#f8f9fa;letter-spacing:0.42px;">+234 08037238231</div>
<div class="c b" style="left:620px;top:302px;width:105px;background:#e2efda;color:#375623;">Client</div>
<div class="c" style="left:725px;top:302px;width:140px;background:#f8f9fa;letter-spacing:0.47px;">2026-02-26</div>
<div class="c" style="left:865px;top:302px;width:140px;background:#f8f9fa;letter-spacing:0.47px;">2026-04-30</div>
<div class="c" style="left:1005px;top:302px;width:280px;background:#f8f9fa;letter-spacing:0.39px;">Waiting for budget approval</div>
<div class="c" style="left:1285px;top:302px;width:61px;background:#fff"></div>
<div class="c" style="left:1346px;top:302px;width:8px;background:#fff;border-right:none"></div>
<div class="rh" style="top:322px">15</div>
<div class="c" style="left:46px;top:322px;width:175px;background:#fff;letter-spacing:0px;">Adaeze Onyekachi</div>
<div class="c" style="left:221px;top:322px;width:245px;background:#fff;letter-spacing:0.41px;">adaeze.onyekachi61@gmail.com</div>
<div class="c" style="left:466px;top:322px;width:154px;background:#fff;letter-spacing:0.42px;">+234 08039241200</div>
<div class="c b" style="left:620px;top:322px;width:105px;background:#e2efda;color:#375623;">VIP Client</div>
<div class="c" style="left:725px;top:322px;width:140px;background:#fff;letter-spacing:0.47px;">2026-04-16</div>
<div class="c" style="left:865px;top:322px;width:140px;background:#fff;letter-spacing:0.47px;">2026-04-16</div>
<div class="c" style="left:1005px;top:322px;width:280px;background:#fff;letter-spacing:0.39px;">High priority lead</div>
<div class="c" style="left:1285px;top:322px;width:61px;background:#fff"></div>
<div class="c" style="left:1346px;top:322px;width:8px;background:#fff;border-right:none"></div>
<div class="rh" style="top:342px">16</div>
<div class="c" style="left:46px;top:342px;width:175px;background:#f8f9fa;letter-spacing:0px;">Kayode Adeyemi</div>
<div class="c" style="left:221px;top:342px;width:245px;background:#f8f9fa;letter-spacing:0.41px;">kayode.adeyemi76@hotmail.com</div>
<div class="c" style="left:466px;top:342px;width:154px;background:#f8f9fa;letter-spacing:0.42px;">+234 09033140500</div>
<div class="c b" style="left:620px;top:342px;width:105px;background:#fce4d6;color:#843c0c;">Cold</div>
<div class="c" style="left:725px;top:342px;width:140px;background:#f8f9fa;letter-spacing:0.47px;">2026-04-02</div>
<div class="c" style="left:865px;top:342px;width:140px;background:#f8f9fa;letter-spacing:0.47px;">2026-05-04</div>
<div class="c" style="left:1005px;top:342px;width:280px;background:#f8f9fa;letter-spacing:0.39px;">High priority lead</div>
<div class="c" style="left:1285px;top:342px;width:61px;background:#fff"></div>
<div class="c" style="left:1346px;top:342px;width:8px;background:#fff;border-right:none"></div>
<div class="rh" style="top:362px">17</div>
<div class="c" style="left:46px;top:362px;width:175px;background:#fff;letter-spacing:0px;">Seun Nwankwo</div>
<div class="c" style="left:221px;top:362px;width:245px;background:#fff;letter-spacing:0.41px;">seun.nwankwo3@yahoo.com</div>
<div class="c" style="left:466px;top:362px;width:154px;background:#fff;letter-spacing:0.42px;">+33 08033258031</div>
<div class="c b" style="left:620px;top:362px;width:105px;background:#e2efda;color:#375623;">VIP Client</div>
<div class="c" style="left:725px;top:362px;width:140px;background:#fff;letter-spacing:0.47px;">2026-04-05</div>
<div class="c" style="left:865px;top:362px;width:140px;background:#fff;letter-spacing:0.47px;">2026-04-16</div>
<div class="c" style="left:1005px;top:362px;width:280px;background:#fff;letter-spacing:0.39px;">Currently using competitor</div>
<div class="c" style="left:1285px;top:362px;width:61px;background:#fff"></div>
<div class="c" style="left:1346px;top:362px;width:8px;background:#fff;border-right:none"></div>
<div class="rh" style="top:382px">18</div>
<div class="c" style="left:46px;top:382px;width:175px;background:#f8f9fa;letter-spacing:0px;">Olumide Ogundimu</div>
<div class="c" style="left:221px;top:382px;width:245px;background:#f8f9fa;letter-spacing:0.41px;">olumide.ogundimu51@yahoo.com</div>
<div class="c" style="left:466px;top:382px;width:154px;background:#f8f9fa;letter-spacing:0.42px;">+234 08034800992</div>
<div class="c b" style="left:620px;top:382px;width:105px;background:#fce4d6;color:#843c0c;">Cold</div>
<div class="c" style="left:725px;top:382px;width:140px;background:#f8f9fa;letter-spacing:0.47px;">2026-02-09</div>
<div class="c" style="left:865px;top:382px;width:140px;background:#f8f9fa;letter-spacing:0.47px;">2026-05-18</div>
<div class="c" style="left:1005px;top:382px;width:280px;background:#f8f9fa;letter-spacing:0.39px;">Currently using competitor</div>
<div class="c" style="left:1285px;top:382px;width:61px;background:#fff"></div>
<div class="c" style="left:1346px;top:382px;width:8px;background:#fff;border-right:none"></div>
<div class="rh" style="top:402px">19</div>
<div class="c" style="left:46px;top:402px;width:175px;background:#fff;letter-spacing:0px;">Chiamaka Ekwueme</div>
<div class="c" style="left:221px;top:402px;width:245px;background:#fff;letter-spacing:0.41px;">chiamaka.ekwueme48@gmail.com</div>
<div class="c" style="left:466px;top:402px;width:154px;background:#fff;letter-spacing:0.42px;">+44 08031171977</div>
<div class="c b" style="left:620px;top:402px;width:105px;background:#e2efda;color:#375623;">VIP Client</div>
<div class="c" style="left:725px;top:402px;width:140px;background:#fff;letter-spacing:0.47px;">2026-02-17</div>
<div class="c" style="left:865px;top:402px;width:140px;background:#fff;letter-spacing:0.47px;">2026-04-25</div>
<div class="c" style="left:1005px;top:402px;width:280px;background:#fff;letter-spacing:0.39px;">High priority lead</div>
<div class="c" style="left:1285px;top:402px;width:61px;background:#fff"></div>
<div class="c" style="left:1346px;top:402px;width:8px;background:#fff;border-right:none"></div>
<div class="rh" style="top:422px">20</div>
<div class="c" style="left:46px;top:422px;width:175px;background:#f8f9fa;letter-spacing:0px;">Kemi Eze</div>
<div class="c" style="left:221px;top:422px;width:245px;background:#f8f9fa;letter-spacing:0.41px;">kemi.eze66@hotmail.com</div>
<div class="c" style="left:466px;top:422px;width:154px;background:#f8f9fa;letter-spacing:0.42px;">+234 08069068154</div>
<div class="c b" style="left:620px;top:422px;width:105px;background:#ddebf7;color:#1f4e79;">Prospect</div>
<div class="c" style="left:725px;top:422px;width:140px;background:#f8f9fa;letter-spacing:0.47px;">2026-03-03</div>
<div class="c" style="left:865px;top:422px;width:140px;background:#f8f9fa;letter-spacing:0.47px;">2026-04-26</div>
<div class="c" style="left:1005px;top:422px;width:280px;background:#f8f9fa;letter-spacing:0.39px;">Ready to onboard next month</div>
<div class="c" style="left:1285px;top:422px;width:61px;background:#fff"></div>
<div class="c" style="left:1346px;top:422px;width:8px;background:#fff;border-right:none"></div>
<div class="rh" style="top:442px">21</div>
<div class="c" style="left:46px;top:442px;width:175px;background:#fff;letter-spacing:0px;">Rotimi Adeyemi</div>
<div class="c" style="left:221px;top:442px;width:245px;background:#fff;letter-spacing:0.41px;">rotimi.adeyemi27@gmail.com</div>
<div class="c" style="left:466px;top:442px;width:154px;background:#fff;letter-spacing:0.42px;">+44 08104986183</div>
<div class="c b" style="left:620px;top:442px;width:105px;background:#fff2cc;color:#7f6000;">Lead</div>
<div class="c" style="left:725px;top:442px;width:140px;background:#fff;letter-spacing:0.47px;">2026-03-27</div>
<div class="c" style="left:865px;top:442px;width:140px;background:#fff;letter-spacing:0.47px;">2026-04-28</div>
<div class="c" style="left:1005px;top:442px;width:280px;background:#fff;letter-spacing:0.39px;">Met at Lagos tech event</div>
<div class="c" style="left:1285px;top:442px;width:61px;background:#fff"></div>
<div class="c" style="left:1346px;top:442px;width:8px;background:#fff;border-right:none"></div>
<div class="abs" style="left:1284px;top:62px;width:0;height:400px;border-left:1px dashed #9aa0a6"></div>
<div class="abs" style="left:1280px;top:54px;width:9px;height:9px;border-radius:5px;background:#0b57d0;border:1px solid #fff"></div>
<div class="abs" style="left:1354px;top:0;width:12px;height:463px;background:#fff;border-left:1px solid #c8c8c8"></div>
<div class="abs" style="left:1355px;top:0;width:11px;height:57px;background:#f8f9fa"></div>
<div class="abs" style="left:1355px;top:57px;width:11px;height:5px;background:#dde3ee"></div>
<div class="abs" style="left:1356px;top:63px;width:8px;height:26px;border-radius:4px;background:#dadada"></div>
<div class="abs" style="left:0;top:450px;width:1366px;height:13px;background:#fff;border-top:1px solid #c6c6c6"></div>
<div class="abs" style="left:0;top:450px;width:46px;height:13px;background:#f8f9fa;border-top:1px solid #c6c6c6;border-right:1px solid #c4c7c5"></div>
<div class="abs" style="left:48px;top:452px;width:694px;height:9px;border-radius:5px;background:#dadada"></div>
<div class="abs" style="left:1324px;top:450px;width:1px;height:13px;background:#d9d9d9"></div>
<div class="abs" style="left:1339px;top:450px;width:1px;height:13px;background:#d9d9d9"></div>
<svg style="left:1328.5px;top:453.5px" width="4" height="6" viewBox="0 0 5 7"><path d="M5 0 V7 L0 3.5 Z" fill="#9aa0a6"/></svg>
<svg style="left:1345.5px;top:453.5px" width="4" height="6" viewBox="0 0 5 7"><path d="M0 0 V7 L5 3.5 Z" fill="#9aa0a6"/></svg>
<div class="abs" style="left:1355px;top:416px;width:11px;height:1px;background:#d9d9d9"></div>
<div class="abs" style="left:1355px;top:433px;width:11px;height:1px;background:#d9d9d9"></div>
<svg style="left:1358px;top:423px" width="5.4" height="3.6" viewBox="0 0 7 5"><path d="M0 5 H7 L3.5 0 Z" fill="#9aa0a6"/></svg>
<svg style="left:1358px;top:440px" width="5.4" height="3.6" viewBox="0 0 7 5"><path d="M0 0 H7 L3.5 5 Z" fill="#9aa0a6"/></svg>
</div>
<div class="abs" style="left:1171px;top:650px;width:187px;height:32px;border-radius:16px;background:#fff;box-shadow:0 1px 3px rgba(60,64,67,.3),0 2px 6px rgba(60,64,67,.15)"></div>
<svg style="left:1181px;top:659px" width="14" height="14" viewBox="0 0 14 14"><rect x="0.9" y="0.9" width="12.2" height="12.2" rx="1.6" fill="none" stroke="#444746" stroke-width="1.8"/><path d="M0.9 5.4 H13.1 M7 5.4 V13.1" stroke="#444746" stroke-width="1.8"/></svg>
<div class="abs" style="left:1205px;top:657px;font-size:13px;line-height:18px;color:#1f1f1f;white-space:nowrap;-webkit-text-stroke:0.25px #1f1f1f">Convert to table</div>
<svg style="left:1312px;top:664.5px" width="7.6" height="4" viewBox="0 0 7.6 4"><path d="M0 0 H7.6 L3.8 4 Z" fill="#444746"/></svg>
<svg style="left:1337px;top:661px" width="10" height="10" viewBox="0 0 10 10"><path d="M0.8 0.8 L9.2 9.2 M9.2 0.8 L0.8 9.2" stroke="#1f1f1f" stroke-width="1.5"/></svg>
<div id="sbar" class="abs"></div>
<svg style="left:56px;top:705px" width="11" height="11" viewBox="0 0 11 11"><path d="M5.5 0 V11 M0 5.5 H11" stroke="#444746" stroke-width="1.5"/></svg>
<svg style="left:95px;top:706px" width="14" height="10" viewBox="0 0 14 10"><path d="M0 1 H14 M0 5 H14 M0 9 H14" stroke="#444746" stroke-width="1.6"/></svg>
<div class="abs" style="left:134px;top:692px;width:145px;height:36px;background:#dfe6f1"></div>
<div class="abs" style="left:145px;top:701px;font-size:14.8px;font-weight:bold;line-height:20px;color:#0b57d0;white-space:nowrap;letter-spacing:0.1px">CRM Contacts</div>
<svg style="left:258px;top:709px" width="8" height="4.5" viewBox="0 0 8 4.5"><path d="M0 0 H8 L4 4.5 Z" fill="#0b57d0"/></svg>
<div class="abs" style="left:291px;top:701px;font-size:15px;line-height:20px;color:#444746;white-space:nowrap;letter-spacing:0.4px;-webkit-text-stroke:0.3px #444746">Summary</div>
<svg style="left:367px;top:709px" width="8" height="4.5" viewBox="0 0 8 4.5"><path d="M0 0 H8 L4 4.5 Z" fill="#444746"/></svg>
<svg style="left:1334px;top:706px" width="8" height="12" viewBox="0 0 8 12"><path d="M7 1 L2 6 L7 11" fill="none" stroke="#444746" stroke-width="1.6"/></svg>
<div id="task" class="abs"></div>
<div class="abs" style="left:0;top:728px;width:48px;height:40px;background:#000"></div>
<svg style="left:16px;top:740px" width="16" height="16" viewBox="0 0 16 16"><path d="M0 2.3 L6.6 1.4 V7.6 H0 Z M7.4 1.3 L16 0 V7.6 H7.4 Z M0 8.4 H6.6 V14.6 L0 13.7 Z M7.4 8.4 H16 V16 L7.4 14.7 Z" fill="#fff"/></svg>
<div class="abs" style="left:48px;top:728px;width:344px;height:40px;background:#323232"></div>
<div class="abs" style="left:58px;top:738px;width:20px;height:20px;border-radius:10px;border:2.6px solid #f2f2f2"></div>
<div class="abs" style="left:84px;top:739px;font-size:14.5px;line-height:20px;color:#b8b8b8;white-space:nowrap">Type here to search</div>
<svg style="left:365px;top:740px" width="12" height="18" viewBox="0 0 12 18"><rect x="3.6" y="1" width="4.8" height="10" rx="2.4" fill="none" stroke="#9a9a9a" stroke-width="1.2"/><path d="M1 8.4 Q1 13.4 6 13.4 Q11 13.4 11 8.4 M6 13.4 V17 M3 17 H9" fill="none" stroke="#9a9a9a" stroke-width="1.2"/></svg>
<svg style="left:405px;top:739px" width="22" height="18" viewBox="0 0 22 18"><rect x="5" y="1.5" width="12" height="14" fill="none" stroke="#fff" stroke-width="1.5"/><path d="M3 3.5 H0.8 V13.5 H3 M19 3.5 H21.2 V13.5 H19" fill="none" stroke="#fff" stroke-width="1.4"/></svg>
<svg style="left:457px;top:737px" width="22" height="22" viewBox="0 0 22 22"><path d="M1 10 C1.6 4 6 0.6 11.4 0.6 C17.6 0.6 21 5 21 10.4 V13 H7.6 C7.8 16.4 10.4 18 13.6 18 C16 18 18 17.4 20 16.2 V20 C18 21.2 15.6 21.8 12.8 21.8 C6.6 21.8 2.8 18 2.8 12.4 C2.8 9 4.4 6.4 7 5 C4.4 5.4 2.2 7.2 1 10 Z M7.8 9.2 H15.4 C15.2 6.6 13.8 5.2 11.6 5.2 C9.6 5.2 8.2 6.6 7.8 9.2 Z" fill="#1479d6" fill-rule="evenodd"/></svg>
<svg style="left:505px;top:738px" width="22" height="20" viewBox="0 0 22 20"><path d="M0.5 2 H8 L9.6 3.6 H21.5 V18.5 H0.5 Z" fill="#f5c04a"/><path d="M0.5 5.4 H21.5 V18.5 H0.5 Z" fill="#fbd768"/><path d="M5.4 12 H16.6 V18.5 H13.4 V15 H8.6 V18.5 H5.4 Z" fill="#3f9be3"/></svg>
<svg style="left:554px;top:735px" width="22" height="24" viewBox="0 0 22 24"><path d="M7 7 V4.6 A4 4 0 0 1 15 4.6 V7" fill="none" stroke="#e8e8e8" stroke-width="1.2"/><path d="M0.5 7 H21.5 V22 Q21.5 23.5 20 23.5 H2 Q0.5 23.5 0.5 22 Z" fill="#f3f3f3"/><rect x="6.2" y="10.4" width="4.4" height="4.4" fill="#f25022"/><rect x="11.4" y="10.4" width="4.4" height="4.4" fill="#7fba00"/><rect x="6.2" y="15.6" width="4.4" height="4.4" fill="#00a4ef"/><rect x="11.4" y="15.6" width="4.4" height="4.4" fill="#ffb900"/></svg>
<svg style="left:602px;top:735px" width="24" height="24" viewBox="0 0 24 24"><defs><radialGradient id="ff" cx="0.65" cy="0.2" r="0.95"><stop offset="0" stop-color="#ffe14d"/><stop offset="0.45" stop-color="#ff8a1c"/><stop offset="0.85" stop-color="#f0313f"/><stop offset="1" stop-color="#c60084"/></radialGradient></defs><path d="M12.6 1 C14 3 15 4 17.6 5 C17.4 3.8 17.8 2.8 18.4 2.2 C21.4 5 23.4 8.6 23.4 13 C23.4 19 18.4 23.6 12 23.6 C5.6 23.6 0.8 19 0.8 13.2 C0.8 10.2 1.8 7.6 3.6 5.8 C3.6 7 3.8 7.8 4.4 8.4 C5.6 5.6 8.4 4.6 10.2 4.4 C10.6 3.2 11.4 2 12.6 1 Z" fill="url(#ff)"/><circle cx="12.4" cy="13.6" r="5" fill="#7a3bd6"/><path d="M7.4 12 C8.6 10.4 10.4 10 12.4 10.6 C14 11 15 12.4 14.6 14 C14.2 15.6 12.4 16.4 10.8 15.8 C12.4 17.4 16 17 17.2 14.4 C18 18 14.6 20.6 11.4 20 C8 19.4 6.2 15.6 7.4 12 Z" fill="#ff9a1f"/></svg>
<div class="abs" style="left:639px;top:728px;width:44px;height:40px;background:#323233"></div>
<div class="abs" style="left:639px;top:766px;width:44px;height:2px;background:#76b9ed"></div>
<svg style="left:651px;top:736px" width="24" height="24" viewBox="0 0 24 24"><circle cx="12" cy="12" r="11.6" fill="#fff"/><path d="M12 12 L1.95 6.2 A11.6 11.6 0 0 1 22.05 6.2 Z" fill="#ea4335"/><path d="M12 12 L22.05 6.2 A11.6 11.6 0 0 1 12 23.6 Z" fill="#fbbc04"/><path d="M12 12 L12 23.6 A11.6 11.6 0 0 1 1.95 6.2 Z" fill="#34a853"/><circle cx="12" cy="12" r="5.4" fill="#fff"/><circle cx="12" cy="12" r="4.3" fill="#4285f4"/></svg>
<div class="abs" style="left:684px;top:728px;width:3px;height:40px;background:#2a2a2b"></div>
<svg style="left:1158px;top:744px" width="12" height="8" viewBox="0 0 12 8"><path d="M1 7 L6 1.6 L11 7" fill="none" stroke="#fff" stroke-width="1.3"/></svg>
<svg style="left:1181px;top:742px" width="17" height="12" viewBox="0 0 17 12"><rect x="5" y="3" width="10.4" height="7.4" fill="none" stroke="#fff" stroke-width="1.1"/><rect x="15.6" y="5.2" width="1.2" height="3" fill="#fff"/><rect x="6.2" y="4.2" width="5" height="5" fill="#fff"/><path d="M2.4 0 V2 M4.4 0 V2 M1.4 2 H5.4 V4.4 Q5.4 6 3.4 6 Q1.4 6 1.4 4.4 Z M3.4 6 V9 H5" fill="none" stroke="#fff" stroke-width="1"/></svg>
<svg style="left:1207px;top:742px" width="14" height="14" viewBox="0 0 14 14"><circle cx="11.4" cy="11.6" r="1.4" fill="#fff"/><path d="M1.2 13 A12 12 0 0 1 13 1.2" fill="none" stroke="#fff" stroke-width="1" opacity="0.75"/><path d="M4.6 13 A8.6 8.6 0 0 1 13 4.6" fill="none" stroke="#fff" stroke-width="1" opacity="0.85"/><path d="M8 13 A5.2 5.2 0 0 1 13 8" fill="none" stroke="#fff" stroke-width="1"/></svg>
<svg style="left:1229px;top:741px" width="17" height="14" viewBox="0 0 17 14"><path d="M0.6 4.6 H3.4 L7 1.2 V12.8 L3.4 9.4 H0.6 Z" fill="none" stroke="#fff" stroke-width="1"/><path d="M9 4.6 Q10.4 7 9 9.4 M11.2 2.8 Q13.6 7 11.2 11.2 M13.4 1 Q16.8 7 13.4 13" fill="none" stroke="#fff" stroke-width="1"/></svg>
<div class="abs" style="left:1244px;top:731px;width:73px;text-align:center;font-size:12px;line-height:16px;color:#fff;white-space:nowrap;letter-spacing:-0.2px">7:30 PM</div>
<div class="abs" style="left:1244px;top:749px;width:73px;text-align:center;font-size:12px;line-height:16px;color:#fff;white-space:nowrap;letter-spacing:-0.2px">4/18/2026</div>
<svg style="left:1325px;top:739px" width="17" height="16" viewBox="0 0 17 16"><path d="M0 0 H16.4 V12.4 H8 L4.4 15.8 V12.4 H0 Z" fill="#fff"/><path d="M3 3.4 H13.4 M3 6 H13.4 M3 8.6 H13.4" stroke="#08080e" stroke-width="1"/></svg>
<div class="abs" style="left:1333px;top:746px;width:16px;height:16px;border-radius:8px;background:#1c1c22;border:1px solid #55555a;color:#fff;font-size:10.5px;line-height:14px;text-align:center">3</div>
<div class="abs" style="left:1361px;top:728px;width:1px;height:40px;background:#3a3a3e"></div>
</div>
</body>
</html>
